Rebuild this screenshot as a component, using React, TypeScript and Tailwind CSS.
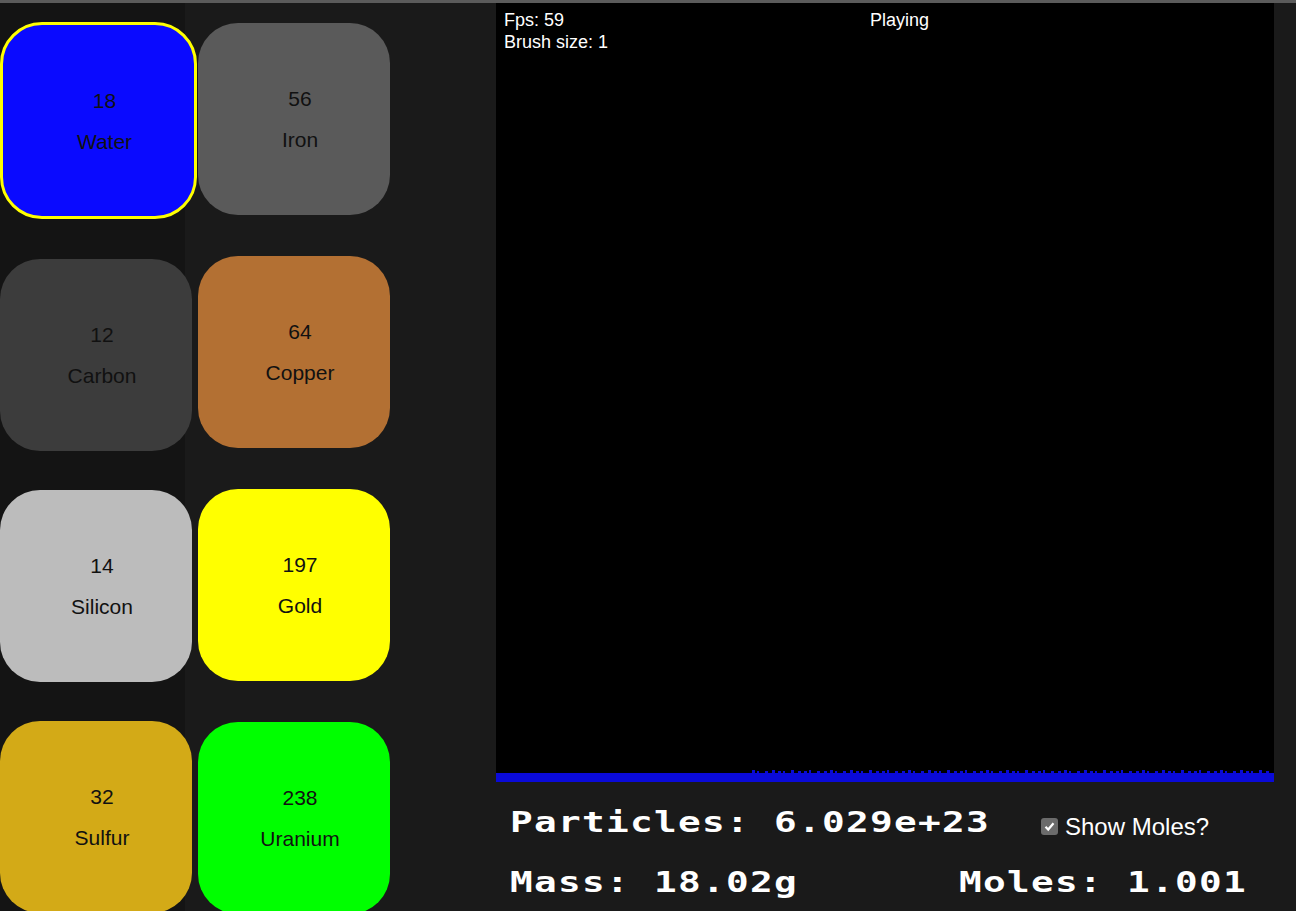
const COL_A = [
  { mass: 18, name: 'Water', bg: 'bg-[#0a0aff]', selected: true },
  { mass: 12, name: 'Carbon', bg: 'bg-[#3c3c3c]' },
  { mass: 14, name: 'Silicon', bg: 'bg-[#bcbcbc]' },
  { mass: 32, name: 'Sulfur', bg: 'bg-[#d3aa17]' },
];

const COL_B = [
  { mass: 56, name: 'Iron', bg: 'bg-[#5a5a5a]' },
  { mass: 64, name: 'Copper', bg: 'bg-[#b37033]' },
  { mass: 197, name: 'Gold', bg: 'bg-[#ffff00]' },
  { mass: 238, name: 'Uranium', bg: 'bg-[#00ff00]' },
];

type Element = { mass: number; name: string; bg: string; selected?: boolean };

function Tile({ el }: { el: Element }) {
  const size = el.selected
    ? 'w-[197px] h-[197px] rounded-[42px] border-[3px] border-[#ffff00]'
    : 'w-[192px] h-[192px] rounded-[40px]';
  return (
    <button
      className={`${size} ${el.bg} shrink-0 pl-[12px] flex flex-col items-center justify-center gap-[20px] text-[21px] leading-[21px] text-[#111] font-['Liberation_Sans',Arial,sans-serif]`}
    >
      <span>{el.mass}</span>
      <span>{el.name}</span>
    </button>
  );
}

const bumps: { x: number; h: number; w: number }[] = [];
for (let x = 256, i = 0; x < 776; i++) {
  bumps.push({ x, h: i % 3 === 0 ? 3 : 2, w: i % 4 === 1 ? 2 : 3 });
  x += 5 + ((i * 7) % 4);
}

function Floor() {
  return (
    <svg width="778" height="12" className="block">
      <rect x="0" y="3" width="778" height="9" fill="#0a0ad8" />
      {bumps.map((b) => (
        <rect key={b.x} x={b.x} y={3 - b.h} width={b.w} height={b.h} fill="#0a0ad8" />
      ))}
    </svg>
  );
}

const pixel =
  "origin-left scale-x-[1.3] font-['DejaVu_Sans_Mono',monospace] font-bold text-[29px] leading-[29px] tracking-[1px] text-white whitespace-nowrap";

export default function App() {
  return (
    <div className="h-[911px] overflow-hidden bg-[#1a1a1a] flex flex-col">
      <div className="h-[3px] bg-[#5b5b5b] shrink-0" />
      <div className="flex flex-1">
        {/* element picker */}
        <div className="w-[496px] shrink-0 flex">
          <div className="w-[185px] shrink-0 bg-[#141414] pt-[19px] flex flex-col">
            <Tile el={COL_A[0]} />
            <div className="mt-[40px] flex flex-col gap-[39px]">
              {COL_A.slice(1).map((el) => (
                <Tile key={el.name} el={el} />
              ))}
            </div>
          </div>
          <div className="ml-[13px] pt-[20px] flex flex-col gap-[41px]">
            {COL_B.map((el) => (
              <Tile key={el.name} el={el} />
            ))}
          </div>
        </div>

        {/* simulation */}
        <div className="w-[778px] shrink-0 flex flex-col">
          <div className="relative h-[779px] bg-black flex flex-col justify-end">
            <div className="absolute left-[8px] top-[6px] text-white text-[18px] leading-[22px] font-['Liberation_Sans',Arial,sans-serif]">
              <div>Fps: 59</div>
              <div>Brush size: 1</div>
            </div>
            <div className="absolute left-[374px] top-[6px] text-white text-[18px] leading-[22px] font-['Liberation_Sans',Arial,sans-serif]">
              Playing
            </div>
            <Floor />
          </div>

          <div className="pl-[14px] pt-[26px] flex flex-col gap-[27px]">
            <div className="flex items-start">
              <div className="w-[531px]">
                <div className={pixel}>Particles: 6.029e+23</div>
              </div>
              <label className="mt-[4px] flex items-center gap-[7px] text-white text-[24px] leading-[29px] font-['Liberation_Sans',Arial,sans-serif]">
                <span className="w-[17px] h-[17px] rounded-[3px] bg-[#6b6b6b] flex items-center justify-center">
                  <svg width="13" height="13" viewBox="0 0 13 13">
                    <path d="M2.5 6.8 L5.2 9.5 L10.5 3.2" fill="none" stroke="white" strokeWidth="2.2" />
                  </svg>
                </span>
                Show Moles?
              </label>
            </div>
            <div className="flex">
              <div className="w-[449px]">
                <div className={pixel}>Mass: 18.02g</div>
              </div>
              <div className={pixel}>Moles: 1.001</div>
            </div>
          </div>
        </div>
      </div>
    </div>
  );
}
